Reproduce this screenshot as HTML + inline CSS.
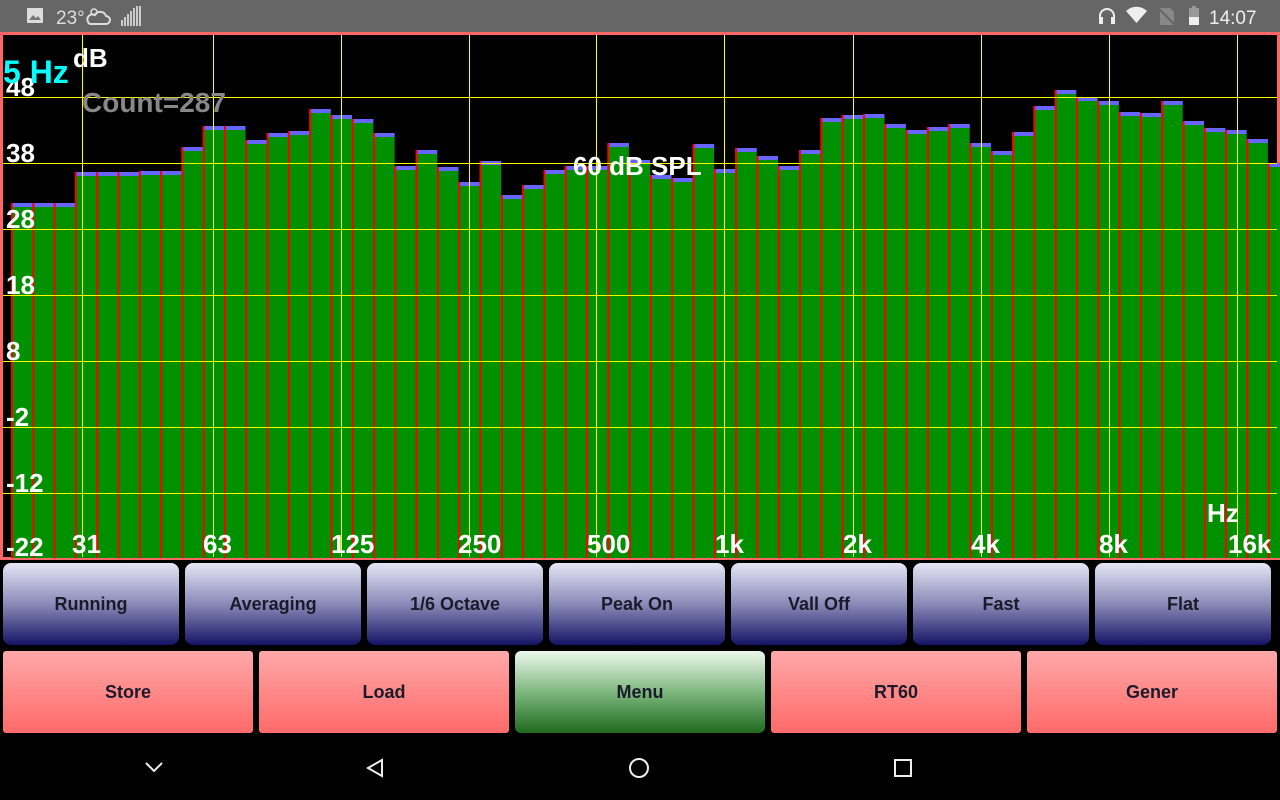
<!DOCTYPE html>
<html><head><meta charset="utf-8"><style>
*{margin:0;padding:0;box-sizing:border-box}
body{width:1280px;height:800px;background:#000;position:relative;overflow:hidden;font-family:"Liberation Sans",sans-serif}
.sb{position:absolute;left:0;top:0;width:1280px;height:32px;background:#666;color:#eee}
.btn{position:absolute;display:flex;align-items:center;justify-content:center;font-size:18px;font-weight:bold;color:#1a1a2a;border-radius:8px}
.b1{top:563px;height:82px;width:176px;background:linear-gradient(#e6e6f6,#8a8ab8 50%,#141466)}
.b2{top:651px;height:82px;width:250px;border-radius:3px;background:linear-gradient(#ffa8a8,#ff6a6a)}
</style></head><body>
<div class="sb">
<svg width="1280" height="32" style="position:absolute;left:0;top:0">
<rect x="27" y="8" width="16" height="15" rx="1" fill="#ddd"/><path d="M29 20l4-5 3 3 2-2 3 4z" fill="#777"/>
<text x="56" y="24" font-size="19" fill="#ddd" font-family="Liberation Sans">23°</text>
<path d="M90 24h16a4 4 0 0 0 0-8a6 6 0 0 0-11-1a4 4 0 0 0-5 9z" fill="none" stroke="#ddd" stroke-width="2"/>
<circle cx="94" cy="12" r="3" fill="none" stroke="#ddd" stroke-width="1.5"/>
<g fill="#ccc"><rect x="121" y="20" width="2" height="6"/><rect x="124" y="17" width="2" height="9"/><rect x="127" y="14" width="2" height="12"/><rect x="130" y="11" width="2" height="15"/><rect x="133" y="8" width="2" height="18"/><rect x="136" y="6" width="2" height="20"/><rect x="139" y="6" width="2" height="20"/></g>
<path d="M1100 22v-6a7 7 0 0 1 14 0v6" fill="none" stroke="#eee" stroke-width="2"/><rect x="1099" y="17" width="4" height="7" fill="#eee"/><rect x="1111" y="17" width="4" height="7" fill="#eee"/>
<path d="M1126 11a15 15 0 0 1 21 0l-10.5 12z" fill="#eee"/>
<path d="M1160 8h10l4 4v13h-14z" fill="#888"/><line x1="1158" y1="8" x2="1176" y2="26" stroke="#666" stroke-width="2"/>
<rect x="1189" y="8" width="10" height="17" fill="#999"/><rect x="1189" y="17" width="10" height="8" fill="#eee"/><rect x="1192" y="6" width="4" height="2" fill="#999"/>
<text x="1209" y="24" font-size="19" fill="#eee" font-family="Liberation Sans">14:07</text>
</svg></div>
<svg width="1280" height="528" style="position:absolute;left:0;top:32px" font-family="Liberation Sans" font-weight="bold">
<rect x="1.5" y="1.5" width="1277" height="525" fill="#000" stroke="#f66" stroke-width="3"/>
<g id="bars"></g>
<g stroke="#ff0" stroke-width="1">
<line x1="3" y1="65.5" x2="1277" y2="65.5"/><line x1="3" y1="131.5" x2="1277" y2="131.5"/><line x1="3" y1="197.5" x2="1277" y2="197.5"/><line x1="3" y1="263.5" x2="1277" y2="263.5"/><line x1="3" y1="329.5" x2="1277" y2="329.5"/><line x1="3" y1="395.5" x2="1277" y2="395.5"/><line x1="3" y1="461.5" x2="1277" y2="461.5"/>
</g>
<g stroke="#ff0" stroke-width="1"><line x1="82.5" y1="3" x2="82.5" y2="525"/><line x1="213.5" y1="3" x2="213.5" y2="525"/><line x1="341.5" y1="3" x2="341.5" y2="525"/><line x1="469.5" y1="3" x2="469.5" y2="525"/><line x1="596.5" y1="3" x2="596.5" y2="525"/><line x1="724.5" y1="3" x2="724.5" y2="525"/><line x1="853.5" y1="3" x2="853.5" y2="525"/><line x1="981.5" y1="3" x2="981.5" y2="525"/><line x1="1109.5" y1="3" x2="1109.5" y2="525"/><line x1="1237.5" y1="3" x2="1237.5" y2="525"/></g>
<g fill="#fff" font-size="26">
<text x="6" y="64">48</text><text x="6" y="130">38</text><text x="6" y="196">28</text><text x="6" y="262">18</text><text x="6" y="328">8</text><text x="6" y="394">-2</text><text x="6" y="460">-12</text><text x="6" y="524">-22</text>
<text x="72" y="521">31</text><text x="203" y="521">63</text><text x="331" y="521">125</text><text x="458" y="521">250</text><text x="587" y="521">500</text><text x="715" y="521">1k</text><text x="843" y="521">2k</text><text x="971" y="521">4k</text><text x="1099" y="521">8k</text><text x="1228" y="521">16k</text>
<text x="1207" y="490">Hz</text><text x="73" y="35">dB</text><text x="573" y="143">60 dB SPL</text>
</g>
<text x="3" y="51" fill="#0ff" font-size="32">5 Hz</text>
<text x="82" y="80" fill="#888" font-size="28">Count=287</text>
</svg>
<div class="btn b1" style="left:3px">Running</div><div class="btn b1" style="left:185px">Averaging</div><div class="btn b1" style="left:367px">1/6 Octave</div><div class="btn b1" style="left:549px">Peak On</div><div class="btn b1" style="left:731px">Vall Off</div><div class="btn b1" style="left:913px">Fast</div><div class="btn b1" style="left:1095px">Flat</div>
<div class="btn b2" style="left:3px">Store</div><div class="btn b2" style="left:259px">Load</div><div class="btn b2" style="left:515px;border-radius:6px;background:linear-gradient(#ecf8ec,#7eb87e 50%,#1f6a1f)">Menu</div><div class="btn b2" style="left:771px">RT60</div><div class="btn b2" style="left:1027px">Gener</div>
<svg width="1280" height="67" style="position:absolute;left:0;top:733px" fill="none" stroke="#eee" stroke-width="2">
<path d="M146 30l8 8 8-8"/><path d="M382 27l-14 8 14 8z"/><circle cx="639" cy="35" r="9"/><rect x="895" y="27" width="16" height="16"/>
</svg>
<script>
var t=[203,203,203,172,172,172,171,171,147,126,126,140,133,131,109,115,119,133,166,150,167,182,161,195,185,170,166,166,143,160,175,178,144,169,148,156,166,150,118,115,114,124,130,127,124,143,151,132,106,90,97,101,112,113,101,121,128,130,139,163];
var s='';for(var i=0;i<t.length;i++){var x=11+i*21.3,y=t[i]-32;s+='<rect x="'+x+'" y="'+y+'" width="21.5" height="'+(526-y)+'" fill="#009000"/><rect x="'+x+'" y="'+y+'" width="21.5" height="4" fill="#66f"/><rect x="'+x+'" y="'+y+'" width="2" height="'+(526-y)+'" fill="#f00"/>';}
document.getElementById('bars').innerHTML=s;
</script>
</body></html>
